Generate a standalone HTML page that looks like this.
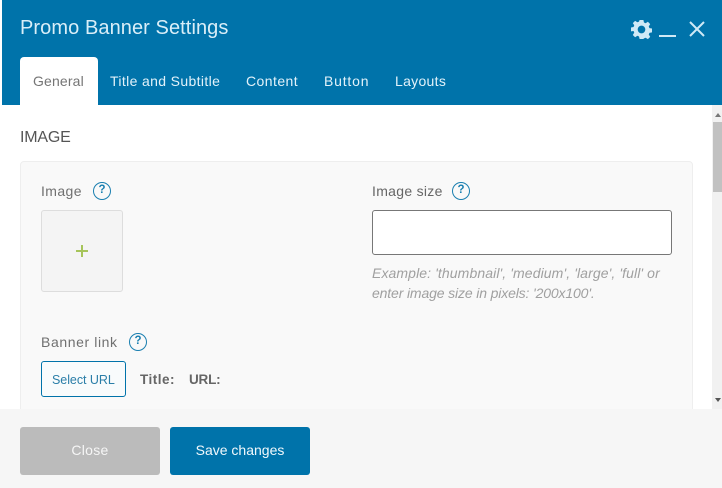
<!DOCTYPE html>
<html>
<head>
<meta charset="utf-8">
<style>
html,body{margin:0;padding:0}
body{width:722px;height:488px;position:relative;overflow:hidden;background:#fff;font-family:"Liberation Sans",sans-serif;color:#666}
div,span,svg{position:absolute;box-sizing:border-box}
.t{white-space:nowrap;line-height:20px}
.q{width:18px;height:18px;border:1.200px solid #1a7fb0;border-radius:50%;color:#1a7fb0;font-size:11.500px;font-weight:bold;text-align:center;line-height:15.500px}
</style>
</head>
<body>
<div style="left:2px;top:0;width:720px;height:105px;background:#0073aa"></div>
<div class="t" style="left:20px;top:18px;font-size:20px;color:#d9eef8;letter-spacing:.08px">Promo Banner Settings</div>
<svg style="left:630.500px;top:19px" width="21" height="21" viewBox="0 0 22 22"><path fill="#cfe9f6" fill-rule="evenodd" d="M9 1h4l.6 2.7 1.7.7 2.4-1.500 2.400 2.500-1.500 2.300.7 1.800 2.700.5v4l-2.700.6-.7 1.700 1.500 2.400-2.400 2.400-2.400-1.500-1.700.7L13 21H9l-.6-2.700-1.700-.7-2.400 1.500-2.400-2.400 1.500-2.400-.7-1.700L0 12.900v-4l2.700-.5.7-1.800-1.500-2.300L4.300 1.900l2.400 1.500 1.700-.7z M11 7a4 4 0 1 0 0 8 4 4 0 0 0 0-8z"/></svg>
<div style="left:659px;top:35px;width:17px;height:2px;background:#cfe9f6"></div>
<svg style="left:688px;top:20px" width="18" height="18" viewBox="0 0 18 18"><path d="M2 2L16 16M16 2L2 16" stroke="#cfe9f6" stroke-width="2" fill="none"/></svg>

<div style="left:20px;top:57px;width:78px;height:50px;background:#fff;border-radius:4px 4px 0 0"></div>
<div class="t" style="left:33px;top:71px;font-size:14px;color:#757575;letter-spacing:.15px">General</div>
<div class="t" style="left:110px;top:71px;font-size:14px;color:#e2f2fa;letter-spacing:.36px">Title and Subtitle</div>
<div class="t" style="left:246px;top:71px;font-size:14px;color:#e2f2fa;letter-spacing:.44px">Content</div>
<div class="t" style="left:324px;top:71px;font-size:14px;color:#e2f2fa;letter-spacing:.8px">Button</div>
<div class="t" style="left:395px;top:71px;font-size:14px;color:#e2f2fa;letter-spacing:.3px">Layouts</div>

<div class="t" style="left:20px;top:128px;font-size:16px;color:#555;letter-spacing:-.2px">IMAGE</div>

<div style="left:20px;top:161px;width:673px;height:260px;background:#f9f9f9;border:1px solid #eee;border-radius:4px"></div>

<div class="t" style="left:41px;top:181px;font-size:14px;color:#707070;letter-spacing:.4px">Image</div>
<div class="q" style="left:93px;top:182px">?</div>
<div style="left:41px;top:210px;width:82px;height:82px;background:#f4f4f4;border:1px solid #ddd;border-radius:3px"></div>
<div style="left:76px;top:250px;width:12px;height:1.500px;background:#a6c45a"></div>
<div style="left:81px;top:245px;width:1.500px;height:12px;background:#a6c45a"></div>

<div class="t" style="left:372px;top:181px;font-size:14px;color:#666;letter-spacing:.3px">Image size</div>
<div class="q" style="left:452px;top:182px">?</div>
<div style="left:372px;top:210px;width:300px;height:45px;background:#fff;border:1px solid #777;border-radius:3px"></div>
<div class="t" style="left:372px;top:263px;font-size:14px;font-style:italic;color:#a0a0a0;letter-spacing:.1px">Example: 'thumbnail', 'medium', 'large', 'full' or</div>
<div class="t" style="left:372px;top:283px;font-size:14px;font-style:italic;color:#a0a0a0;letter-spacing:-.14px">enter image size in pixels: '200x100'.</div>

<div class="t" style="left:41px;top:332px;font-size:14px;color:#707070;letter-spacing:.6px">Banner link</div>
<div class="q" style="left:129px;top:333px">?</div>
<div style="left:41px;top:361px;width:85px;height:36px;background:#f8fbfc;border:1px solid #0073aa;border-radius:3px"></div>
<div class="t" style="left:52px;top:370px;font-size:12.500px;color:#2a7ea8;letter-spacing:-.05px">Select URL</div>
<div class="t" style="left:140px;top:370px;font-size:13.500px;font-weight:bold;color:#666;letter-spacing:.5px">Title:</div>
<div class="t" style="left:189px;top:370px;font-size:13.500px;font-weight:bold;color:#666;letter-spacing:-.2px">URL:</div>

<div style="left:712px;top:105px;width:10px;height:304px;background:#f1f1f1"></div>
<div style="left:713px;top:122px;width:9px;height:70px;background:#c1c1c1"></div>
<div style="left:715px;top:113px;width:0;height:0;border-left:3.500px solid transparent;border-right:3.500px solid transparent;border-bottom:4px solid #777"></div>
<div style="left:715px;top:398px;width:0;height:0;border-left:3.500px solid transparent;border-right:3.500px solid transparent;border-top:4px solid #555"></div>

<div style="left:0;top:409px;width:722px;height:79px;background:#f6f6f6"></div>
<div style="left:20px;top:427px;width:140px;height:48px;background:#bbb;border-radius:3px;color:#f6f6f6;font-size:14px;text-align:center;line-height:47px;letter-spacing:.3px">Close</div>
<div style="left:170px;top:427px;width:140px;height:48px;background:#0073aa;border-radius:3px;color:#f0f8fc;font-size:14px;text-align:center;line-height:47px;letter-spacing:0">Save changes</div>
</body>
</html>
